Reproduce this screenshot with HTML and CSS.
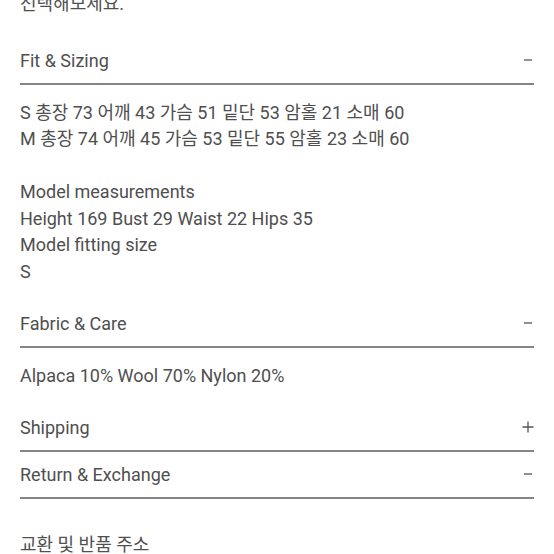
FILE: index.html
```html
<!DOCTYPE html>
<html lang="ko">
<head>
<meta charset="utf-8">
<link rel="stylesheet" href="styles.css">
</head>
<body>
<div class="page">
  <p class="intro">선택해모세요.</p>

  <div class="acc-head">
    <span>Fit &amp; Sizing</span>
    <svg class="icon" width="12" height="12" viewBox="0 0 12 12"><path d="M2 6H10" /></svg>
  </div>
  <div class="acc-body">
    <p>S 총장 73 어깨 43 가슴 51 밑단 53 암홀 21 소매 60</p>
    <p>M 총장 74 어깨 45 가슴 53 밑단 55 암홀 23 소매 60</p>
    <p class="blank">&nbsp;</p>
    <p>Model measurements</p>
    <p>Height 169 Bust 29 Waist 22 Hips 35</p>
    <p>Model fitting size</p>
    <p>S</p>
  </div>

  <div class="acc-head">
    <span>Fabric &amp; Care</span>
    <svg class="icon" width="12" height="12" viewBox="0 0 12 12"><path d="M2 6H10" /></svg>
  </div>
  <div class="acc-body">
    <p>Alpaca 10% Wool 70% Nylon 20%</p>
  </div>

  <div class="acc-head">
    <span>Shipping</span>
    <svg class="icon" width="12" height="12" viewBox="0 0 12 12"><path d="M0.5 6H11.5M6 0.5V11.5" /></svg>
  </div>

  <div class="acc-head">
    <span>Return &amp; Exchange</span>
    <svg class="icon" width="12" height="12" viewBox="0 0 12 12"><path d="M2 6H10" /></svg>
  </div>

  <div class="addr">
    <p>교환 및 반품 주소</p>
  </div>
</div>
</body>
</html>
```

FILE: styles.css
```css
html, body {
  margin: 0;
  padding: 0;
  background: #ffffff;
}

body {
  font-family: Roboto, "Noto Sans CJK KR", sans-serif;
  font-size: 18px;
  color: #4f4f4f;
  overflow: hidden;
}

.page {
  padding: 0 20px;
}

p {
  margin: 0;
  line-height: 26.5px;
}

.intro {
  margin-top: -9px;
  padding-bottom: 20px;
}

.acc-head {
  height: 45px;
  border-bottom: 2px solid #858585;
  display: flex;
  align-items: center;
  justify-content: space-between;
}

.icon {
  stroke: #555;
  stroke-width: 1.3;
  fill: none;
}

.acc-body {
  padding: 15px 0 15.5px;
}

.addr {
  padding-top: 33px;
}
```
